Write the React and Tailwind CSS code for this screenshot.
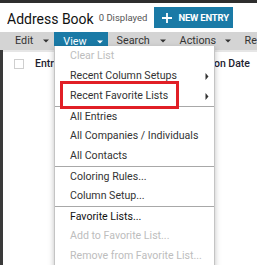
import React from 'react';

const Caret = ({ light }) => (
    <svg width="6" height="4" viewBox="0 0 6 4" className="shrink-0">
        <path d="M0 0.5 L6 0.5 L3 3.5 Z" fill={light ? '#ffffff' : '#333333'} />
    </svg>
);

const SubArrow = () => (
    <svg width="4" height="7" viewBox="0 0 4 7" className="shrink-0">
        <path d="M0.5 0 L3.5 3.5 L0.5 7 Z" fill="#333333" />
    </svg>
);

const toolbar = [
    { label: 'Edit', w: 'w-[49px] ml-[6px]' },
    { label: 'View', w: 'w-[54px]', active: true },
    { label: 'Search', w: 'w-[64px]' },
    { label: 'Actions', w: 'w-[66px]' },
];

const menuItems = [
    { label: 'Clear List', disabled: true },
    { label: 'Recent Column Setups', sub: true },
    { label: 'Recent Favorite Lists', sub: true },
    { label: 'All Entries', sep: true },
    { label: 'All Companies / Individuals' },
    { label: 'All Contacts' },
    { label: 'Coloring Rules...', sep: true },
    { label: 'Column Setup...' },
    { label: 'Favorite Lists...', sep: true, dark: true },
    { label: 'Add to Favorite List...', disabled: true },
    { label: 'Remove from Favorite List...', disabled: true },
];

export default function App() {
    return (
        <div className="relative w-[257px] h-[265px] overflow-hidden bg-white border-t-[3px] border-[#2e2e2e] font-['Roboto',sans-serif]">
            {/* Header */}
            <div className="h-[29px] flex items-center pl-[7px]">
                <h1 className="text-[14px] leading-none text-[#111] scale-y-110">Address Book</h1>
                <span className="ml-[5px] text-[9.5px] text-[#555] mt-[2px]">0 Displayed</span>
                <button className="ml-[7px] h-[21px] w-[79px] bg-[#1a7aa6] flex items-center pl-[8px] gap-[6px] text-white">
                    <svg width="10" height="10" viewBox="0 0 10 10">
                        <path d="M5 0 V10 M0 5 H10" stroke="#fff" strokeWidth="1.8" />
                    </svg>
                    <span className="text-[9.5px] font-bold tracking-[-0.2px] leading-none">NEW ENTRY</span>
                </button>
            </div>

            {/* Toolbar */}
            <div className="h-[18px] bg-[#d4d4d4] flex items-stretch text-[10.8px] text-[#333]">
                {toolbar.map(t => (
                    <div key={t.label} className={`${t.w} flex items-center pl-[9px] pr-[5px] ${t.active ? 'bg-[#1a7aa6] text-white mb-[-2px]' : ''}`}>
                        <span>{t.label}</span>
                        <span className="ml-auto"><Caret light={t.active} /></span>
                    </div>
                ))}
                <div className="flex items-center pl-[9px]">Re</div>
            </div>

            {/* Body */}
            <div className="flex h-full">
                <div className="w-[3px] bg-[#3a3a3a] shrink-0" />
                <div className="flex-1 border-t-2 border-[#e6e6e6]">
                    <div className="h-[24px] flex items-center pl-[11px] text-[10.5px] font-medium text-[#1d2230]">
                        <div className="w-[10px] h-[10px] border border-[#cfcfcf] bg-white" />
                        <span className="ml-[11px]">Entry</span>
                        <span className="ml-auto mr-[7px]">Expiration Date</span>
                    </div>
                </div>
            </div>

            {/* View menu */}
            <div className="absolute left-[54px] top-[43px] w-[161px] h-[240px] bg-white border-x border-[#c4c4c4] shadow-[0_2px_6px_rgba(0,0,0,0.25)] text-[10.6px]">
                {menuItems.map(m => (
                    <div
                        key={m.label}
                        className={`h-[20px] flex items-center pl-[15px] pr-[5px] ${m.sep ? 'border-t border-[#a8a8a8]' : ''} ${m.disabled ? 'text-[#bdbdbd]' : m.dark ? 'text-[#111]' : 'text-[#333]'}`}
                    >
                        <span>{m.label}</span>
                        {m.sub && <span className="ml-auto"><SubArrow /></span>}
                    </div>
                ))}
            </div>

            {/* Highlight box */}
            <div className="absolute left-[60px] top-[78px] w-[119px] h-[28px] border-[3px] border-[#e11f26]" />
        </div>
    );
}
